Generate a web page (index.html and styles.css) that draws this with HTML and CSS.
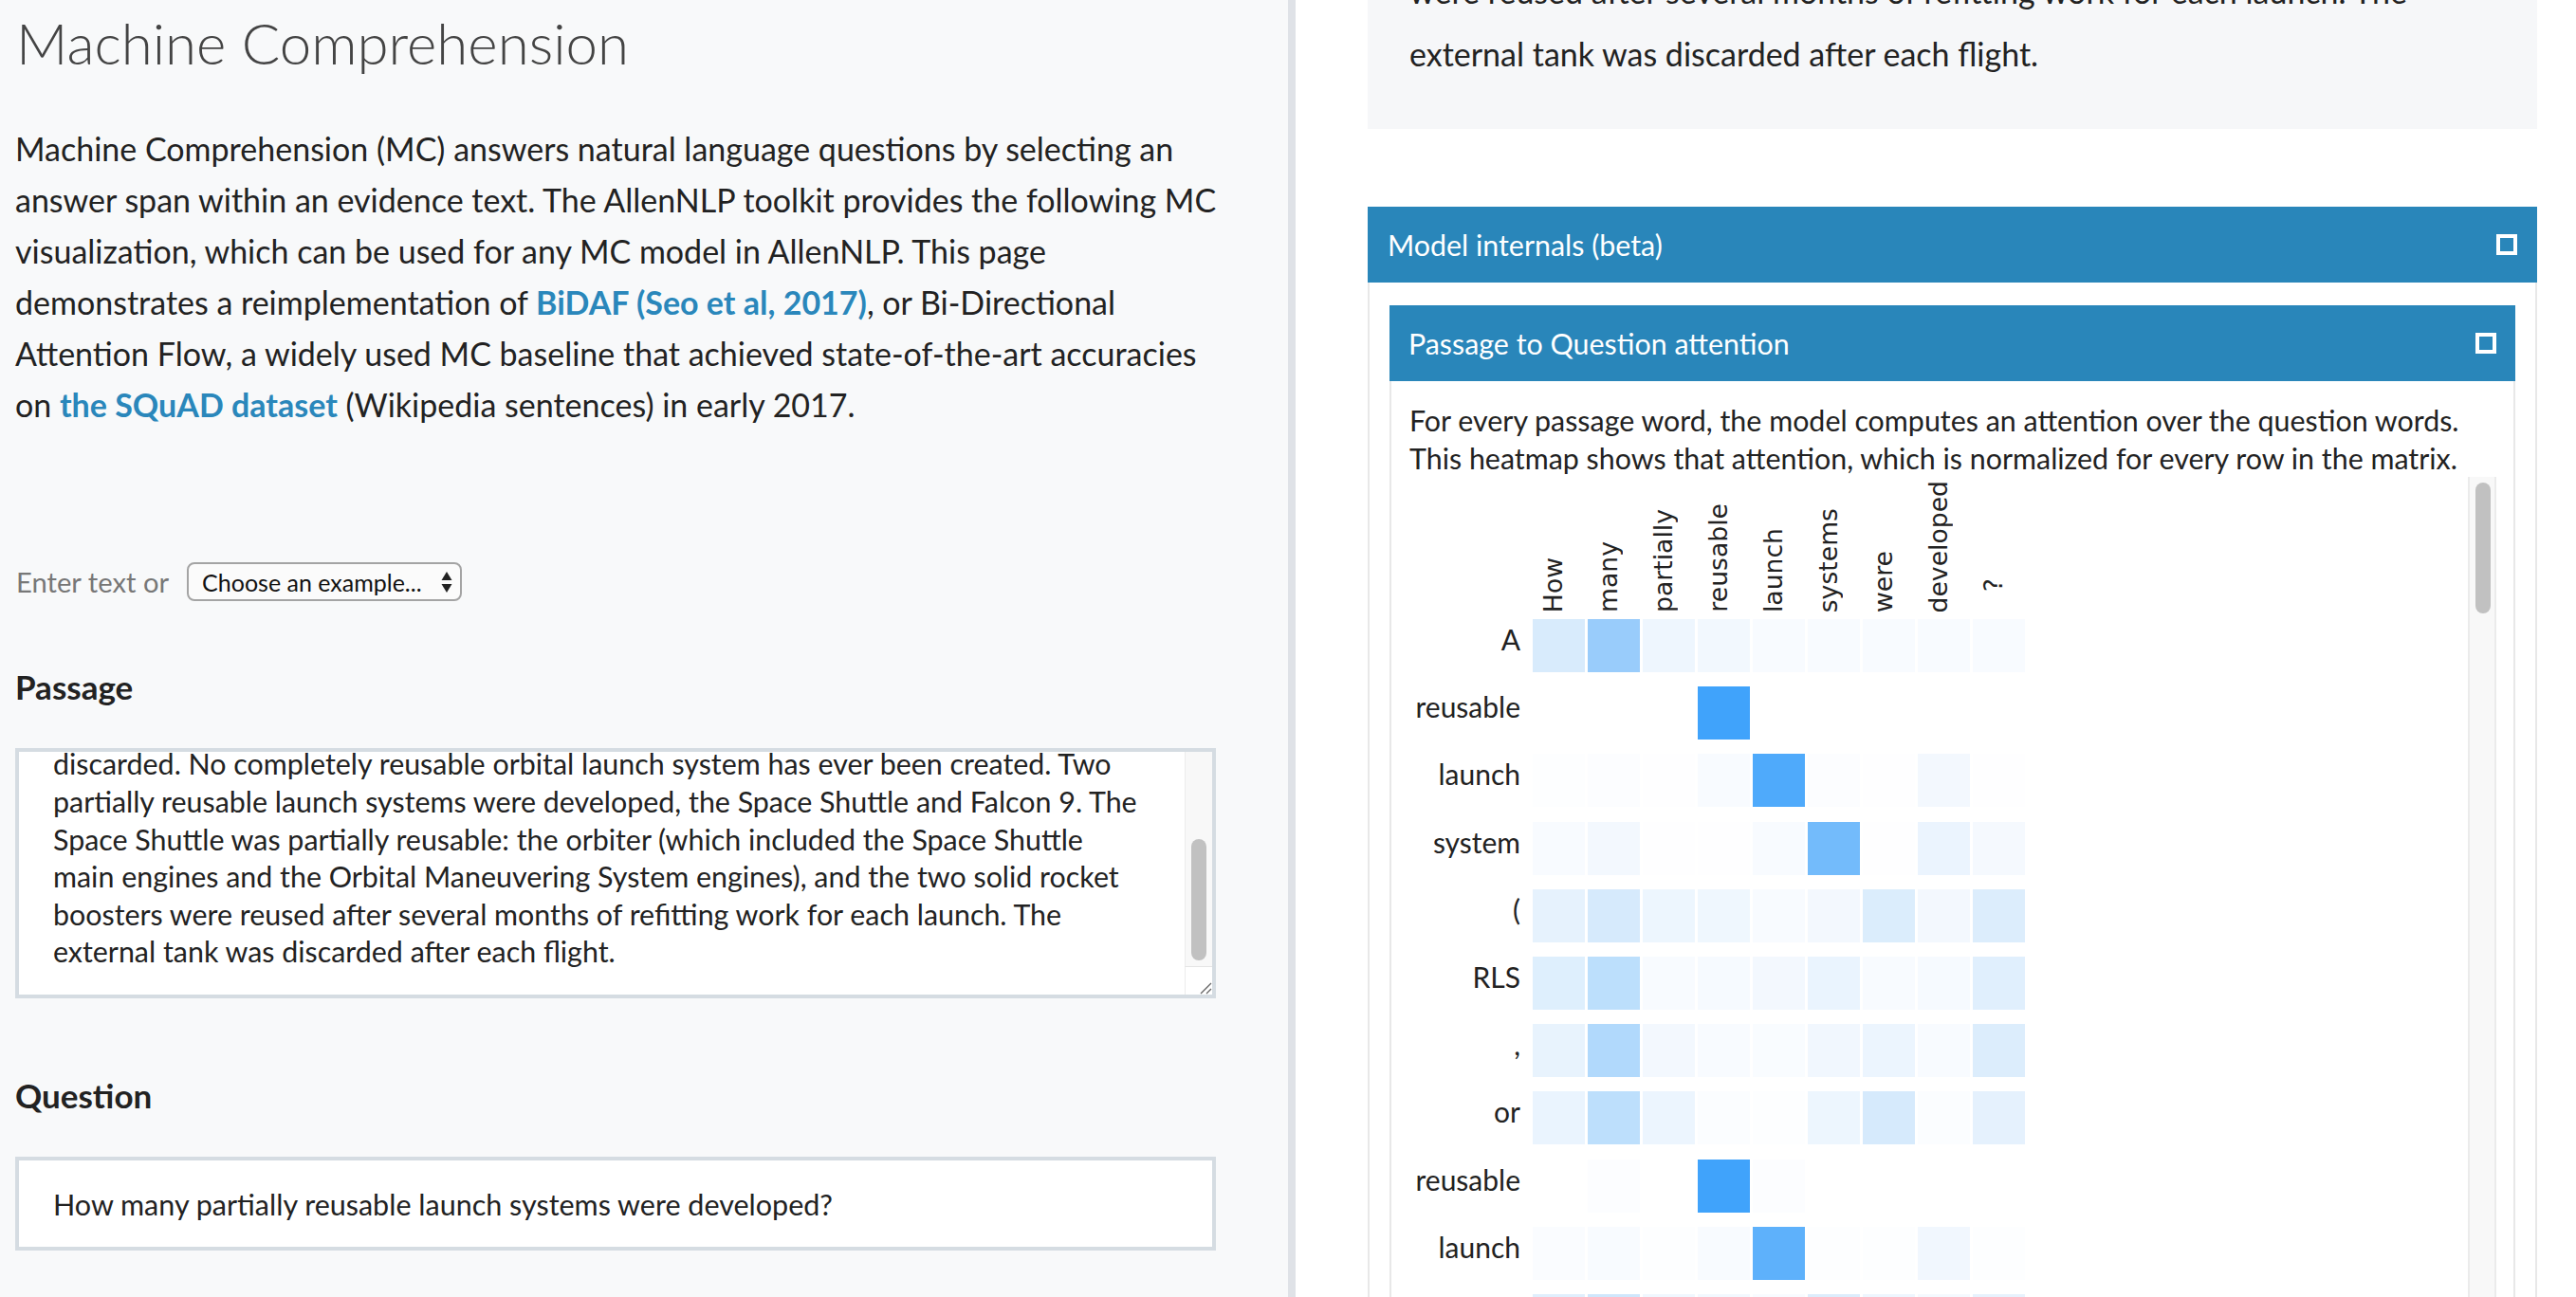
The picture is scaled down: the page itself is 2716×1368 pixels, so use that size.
FILE: index.html
```html
<!DOCTYPE html>
<html lang="en">
<head>
<meta charset="utf-8">
<title>Machine Comprehension</title>
<link rel="stylesheet" href="styles.css">
</head>
<body>
<div class="page">
  <main class="left">
    <h1 class="title">Machine Comprehension</h1>
    <p class="intro">Machine Comprehension (MC) answers natural language questions by selecting an answer span within an evidence text. The AllenNLP toolkit provides the following MC visualization, which can be used for any MC model in AllenNLP. This page demonstrates a reimplementation of <a class="link" href="#">BiDAF (Seo et al, 2017)</a>, or Bi-Directional Attention Flow, a widely used MC baseline that achieved state-of-the-art accuracies on <a class="link" href="#">the SQuAD dataset</a> (Wikipedia sentences) in early 2017.</p>
    <div class="example-row">
      <span class="example-label">Enter text or</span>
      <div class="select">
        <span>Choose an example...</span>
        <svg class="select-arrows" width="12" height="24" viewBox="0 0 12 24"><path d="M6 1 L11.5 10 L0.5 10 Z" fill="#222"/><path d="M0.5 14 L11.5 14 L6 23 Z" fill="#222"/></svg>
      </div>
    </div>
    <h2 class="field-title passage-title">Passage</h2>
    <div class="textarea">
      <div class="textarea-text"><p>A reusable launch system (RLS, or reusable launch vehicle, RLV) is a launch system which is capable of launching a payload into space more than once. This contrasts with expendable launch systems, where each launch vehicle is launched once and then<br>discarded. No completely reusable orbital launch system has ever been created. Two<br>partially reusable launch systems were developed, the Space Shuttle and Falcon 9. The<br>Space Shuttle was partially reusable: the orbiter (which included the Space Shuttle<br>main engines and the Orbital Maneuvering System engines), and the two solid rocket<br>boosters were reused after several months of refitting work for each launch. The<br>external tank was discarded after each flight.</p></div>
      <div class="sb">
        <div class="sb-track"><div class="sb-thumb"></div></div>
        <div class="resizer"><svg width="16" height="16" viewBox="0 0 16 16"><path d="M15 4 L4 15 M15 10 L10 15" stroke="#666" stroke-width="1.3" fill="none"/></svg></div>
      </div>
    </div>
    <h2 class="field-title question-title">Question</h2>
    <div class="input">How many partially reusable launch systems were developed?</div>
  </main>

  <aside class="right">
    <div class="passage-out"><p>A reusable launch system (RLS, or reusable launch vehicle, RLV) is a launch system which is capable of launching a payload into space more than once. This contrasts with expendable launch systems, where each launch vehicle is launched once and then discarded. No completely reusable orbital launch system has ever been created. Two partially reusable launch systems were developed, the Space Shuttle and Falcon 9. The Space Shuttle was partially reusable: the orbiter (which included the Space Shuttle main engines and the Orbital Maneuvering System engines), and the two solid rocket boosters were reused after several months of refitting work for each launch. The external tank was discarded after each flight.</p></div>

    <section class="panel">
      <header class="panel-head"><span>Model internals (beta)</span><span class="toggle"></span></header>
      <div class="panel-body">
        <section class="subpanel">
          <header class="panel-head sub-head"><span>Passage to Question attention</span><span class="toggle"></span></header>
          <div class="subpanel-body">
            <p class="desc">For every passage word, the model computes an attention over the question words. This heatmap shows that attention, which is normalized for every row in the matrix.</p>
            <div class="hm-wrap">
              <div class="heatmap">
                <div class="hm-head">
                  <div class="corner"></div>
                  <div class="col"><span>How</span></div>
                  <div class="col"><span>many</span></div>
                  <div class="col"><span>partially</span></div>
                  <div class="col"><span>reusable</span></div>
                  <div class="col"><span>launch</span></div>
                  <div class="col"><span>systems</span></div>
                  <div class="col"><span>were</span></div>
                  <div class="col"><span>developed</span></div>
                  <div class="col col-q"><span>?</span></div>
                </div>
                <div class="hm-rows">
                  <div class="hm-row"><div class="row-label">A</div><div class="cell" style="background:#d8ebfc"></div><div class="cell" style="background:#99ccfb"></div><div class="cell" style="background:#eef6fe"></div><div class="cell" style="background:#f2f8fe"></div><div class="cell" style="background:#f8fbff"></div><div class="cell" style="background:#f8fbff"></div><div class="cell" style="background:#f8fbff"></div><div class="cell" style="background:#f8fbff"></div><div class="cell" style="background:#f8fbff"></div></div>
                  <div class="hm-row"><div class="row-label">reusable</div><div class="cell" style="background:#ffffff"></div><div class="cell" style="background:#ffffff"></div><div class="cell" style="background:#ffffff"></div><div class="cell" style="background:#40a3fb"></div><div class="cell" style="background:#ffffff"></div><div class="cell" style="background:#ffffff"></div><div class="cell" style="background:#ffffff"></div><div class="cell" style="background:#ffffff"></div><div class="cell" style="background:#ffffff"></div></div>
                  <div class="hm-row"><div class="row-label">launch</div><div class="cell" style="background:#fdfeff"></div><div class="cell" style="background:#fcfdff"></div><div class="cell" style="background:#fefeff"></div><div class="cell" style="background:#f8fbff"></div><div class="cell" style="background:#4faafb"></div><div class="cell" style="background:#fcfdff"></div><div class="cell" style="background:#fefeff"></div><div class="cell" style="background:#f3f8fe"></div><div class="cell" style="background:#fefeff"></div></div>
                  <div class="hm-row"><div class="row-label">system</div><div class="cell" style="background:#f8fbff"></div><div class="cell" style="background:#f3f8fe"></div><div class="cell" style="background:#fefeff"></div><div class="cell" style="background:#fefeff"></div><div class="cell" style="background:#f8fbff"></div><div class="cell" style="background:#73bbfb"></div><div class="cell" style="background:#fefeff"></div><div class="cell" style="background:#ebf4fe"></div><div class="cell" style="background:#f5f9fe"></div></div>
                  <div class="hm-row"><div class="row-label">(</div><div class="cell" style="background:#e6f2fd"></div><div class="cell" style="background:#d6eafc"></div><div class="cell" style="background:#edf6fe"></div><div class="cell" style="background:#eff7fe"></div><div class="cell" style="background:#f8fbff"></div><div class="cell" style="background:#f3f8fe"></div><div class="cell" style="background:#dbedfc"></div><div class="cell" style="background:#f3f8fe"></div><div class="cell" style="background:#dcedfc"></div></div>
                  <div class="hm-row"><div class="row-label">RLS</div><div class="cell" style="background:#deeffd"></div><div class="cell" style="background:#bcdffc"></div><div class="cell" style="background:#f8fbff"></div><div class="cell" style="background:#f6faff"></div><div class="cell" style="background:#f3f8fe"></div><div class="cell" style="background:#eaf4fe"></div><div class="cell" style="background:#f8fbff"></div><div class="cell" style="background:#f6faff"></div><div class="cell" style="background:#e0effd"></div></div>
                  <div class="hm-row"><div class="row-label">,</div><div class="cell" style="background:#e8f3fd"></div><div class="cell" style="background:#b1d9fc"></div><div class="cell" style="background:#f3f8fe"></div><div class="cell" style="background:#f8fbff"></div><div class="cell" style="background:#f9fcff"></div><div class="cell" style="background:#f1f7fe"></div><div class="cell" style="background:#ecf5fe"></div><div class="cell" style="background:#f8fbff"></div><div class="cell" style="background:#dcedfc"></div></div>
                  <div class="hm-row"><div class="row-label">or</div><div class="cell" style="background:#eaf4fe"></div><div class="cell" style="background:#bddffc"></div><div class="cell" style="background:#ecf5fe"></div><div class="cell" style="background:#fbfdff"></div><div class="cell" style="background:#fdfeff"></div><div class="cell" style="background:#edf6fe"></div><div class="cell" style="background:#d6eafc"></div><div class="cell" style="background:#fbfdff"></div><div class="cell" style="background:#e5f1fd"></div></div>
                  <div class="hm-row"><div class="row-label">reusable</div><div class="cell" style="background:#ffffff"></div><div class="cell" style="background:#fcfdff"></div><div class="cell" style="background:#ffffff"></div><div class="cell" style="background:#40a3fb"></div><div class="cell" style="background:#fcfdff"></div><div class="cell" style="background:#ffffff"></div><div class="cell" style="background:#ffffff"></div><div class="cell" style="background:#ffffff"></div><div class="cell" style="background:#ffffff"></div></div>
                  <div class="hm-row"><div class="row-label">launch</div><div class="cell" style="background:#fafcff"></div><div class="cell" style="background:#f8fbff"></div><div class="cell" style="background:#fdfeff"></div><div class="cell" style="background:#f8fbff"></div><div class="cell" style="background:#5eb1fb"></div><div class="cell" style="background:#fdfeff"></div><div class="cell" style="background:#fdfeff"></div><div class="cell" style="background:#f1f7fe"></div><div class="cell" style="background:#fdfeff"></div></div>
                  <div class="hm-row"><div class="row-label">vehicle</div><div class="cell" style="background:#e0effd"></div><div class="cell" style="background:#cfe7fc"></div><div class="cell" style="background:#f0f7fe"></div><div class="cell" style="background:#f2f8fe"></div><div class="cell" style="background:#f8fbff"></div><div class="cell" style="background:#dcedfc"></div><div class="cell" style="background:#eef6fe"></div><div class="cell" style="background:#f4f9fe"></div><div class="cell" style="background:#e7f2fd"></div></div>
                </div>
              </div>
              <div class="vscroll"><div class="vthumb"></div></div>
            </div>
          </div>
        </section>
      </div>
    </section>
  </aside>
</div>
</body>
</html>
```

FILE: styles.css
```css
html, body {
  margin: 0;
  padding: 0;
}

body {
  font-family: Lato, "Liberation Sans", sans-serif;
  color: #222;
  height: 1368px;
  overflow: hidden;
  background: #fff;
}

.page {
  display: flex;
  height: 1368px;
  overflow: hidden;
}

/* ---------- left column ---------- */
.left {
  width: 1366px;
  flex: none;
  box-sizing: border-box;
  background: #f8f9fa;
  border-right: 8px solid #dfe2e7;
  padding: 9px 76px 0 16px;
}

.title {
  margin: 0 0 49px;
  padding-left: 1px;
  font-size: 60px;
  font-weight: 300;
  line-height: 1.2;
  color: #444;
}

.intro {
  margin: 0 -24px 0 0;
  font-size: 34px;
  line-height: 54px;
}

.link {
  color: #2a87bb;
  font-weight: 700;
  text-decoration: none;
}

.example-row {
  display: flex;
  align-items: center;
  gap: 19px;
  height: 41px;
  margin-top: 139px;
}

.example-label {
  font-size: 29.2px;
  color: #777;
  padding-left: 1px;
}

.select {
  width: 290px;
  height: 41px;
  box-sizing: border-box;
  border: 2px solid #a4a4a4;
  border-radius: 8px;
  background: #fbfbfb;
  display: flex;
  align-items: center;
  justify-content: space-between;
  padding: 0 8px 0 14px;
  font-size: 25px;
  color: #111;
}

.field-title {
  font-size: 35px;
  font-weight: 700;
  line-height: 1.2;
  margin: 0 0 44px;
}

.passage-title { margin-top: 69px; }
.question-title { margin-top: 81px; }

.textarea {
  height: 264px;
  box-sizing: border-box;
  border: 4px solid #d5dce2;
  background: #fff;
  display: flex;
}

.textarea-text {
  flex: 1;
  min-width: 0;
  overflow: hidden;
  display: flex;
  flex-direction: column;
  justify-content: flex-end;
  padding: 0 8px 25px 36px;
  font-size: 30.4px;
  line-height: 39.6px;
}

.textarea-text p { margin: 0; }

.sb {
  width: 29px;
  flex: none;
  display: flex;
  flex-direction: column;
}

.sb-track {
  flex: 1;
  box-sizing: border-box;
  background: #f8f8f8;
  border-left: 1px solid #ececec;
  padding-top: 92px;
}

.sb-thumb {
  width: 16px;
  height: 128px;
  margin-left: 6px;
  border-radius: 8px;
  background: #c1c1c1;
}

.resizer {
  height: 30px;
  box-sizing: border-box;
  border-top: 1px solid #e4e4e4;
  border-left: 1px solid #ececec;
  background: #fff;
  display: flex;
  align-items: flex-end;
  justify-content: flex-end;
}

.input {
  height: 99px;
  box-sizing: border-box;
  border: 4px solid #d5dce2;
  background: #fff;
  display: flex;
  align-items: center;
  padding-left: 36px;
  font-size: 30.5px;
}

/* ---------- right column ---------- */
.right {
  flex: 1;
  min-width: 0;
  padding: 0 41px 0 76px;
  overflow: hidden;
}

.passage-out {
  height: 136px;
  box-sizing: border-box;
  background: #f6f7f9;
  display: flex;
  flex-direction: column;
  justify-content: flex-end;
  overflow: hidden;
  padding: 0 44px 46px;
  font-size: 34px;
  line-height: 66px;
}

.passage-out p { margin: 0; }

.panel { margin-top: 82px; }

.panel-head {
  height: 80px;
  box-sizing: border-box;
  background: #2986ba;
  color: #fff;
  display: flex;
  align-items: center;
  justify-content: space-between;
  padding: 0 21px;
  font-size: 30.4px;
}

.toggle {
  width: 22px;
  height: 22px;
  box-sizing: border-box;
  border: 4px solid #fff;
}

.panel-body {
  border-left: 2px solid #e8e8e8;
  border-right: 2px solid #e8e8e8;
  padding: 24px 21px 0;
}

.sub-head { padding: 0 20px; }

.subpanel-body {
  border-left: 2px solid #e8e8e8;
  border-right: 2px solid #e8e8e8;
  padding: 21px 18px 0 0;
}

.desc {
  margin: 0;
  padding-left: 19px;
  font-size: 30.4px;
  line-height: 40px;
}

.hm-wrap { display: flex; }

.heatmap { flex: 1; }

.hm-head {
  display: flex;
  gap: 3px;
  height: 150px;
}

.corner { width: 146px; flex: none; }

.col {
  width: 55px;
  flex: none;
  box-sizing: border-box;
  display: flex;
  align-items: flex-end;
  justify-content: center;
  padding: 0 12px 7px 0;
}

.col span {
  writing-mode: vertical-rl;
  transform: rotate(180deg);
  font-family: "DejaVu Sans", sans-serif;
  font-size: 26.67px;
  line-height: 31px;
  white-space: nowrap;
}

.col-q { padding-bottom: 29px; }

.hm-rows {
  display: flex;
  flex-direction: column;
  gap: 15.2px;
}

.hm-row {
  display: flex;
  gap: 3px;
  height: 56px;
}

.row-label {
  width: 146px;
  flex: none;
  box-sizing: border-box;
  padding-right: 10px;
  text-align: right;
  font-size: 30px;
  line-height: 42px;
}

.cell { width: 55px; flex: none; }

.vscroll {
  width: 30px;
  flex: none;
  box-sizing: border-box;
  background: #f8f8f8;
  border-left: 2px solid #ebebeb;
  border-right: 2px solid #ebebeb;
  padding-top: 6px;
}

.vthumb {
  width: 16px;
  height: 138px;
  margin-left: 6px;
  border-radius: 8px;
  background: #c1c1c1;
}
```
